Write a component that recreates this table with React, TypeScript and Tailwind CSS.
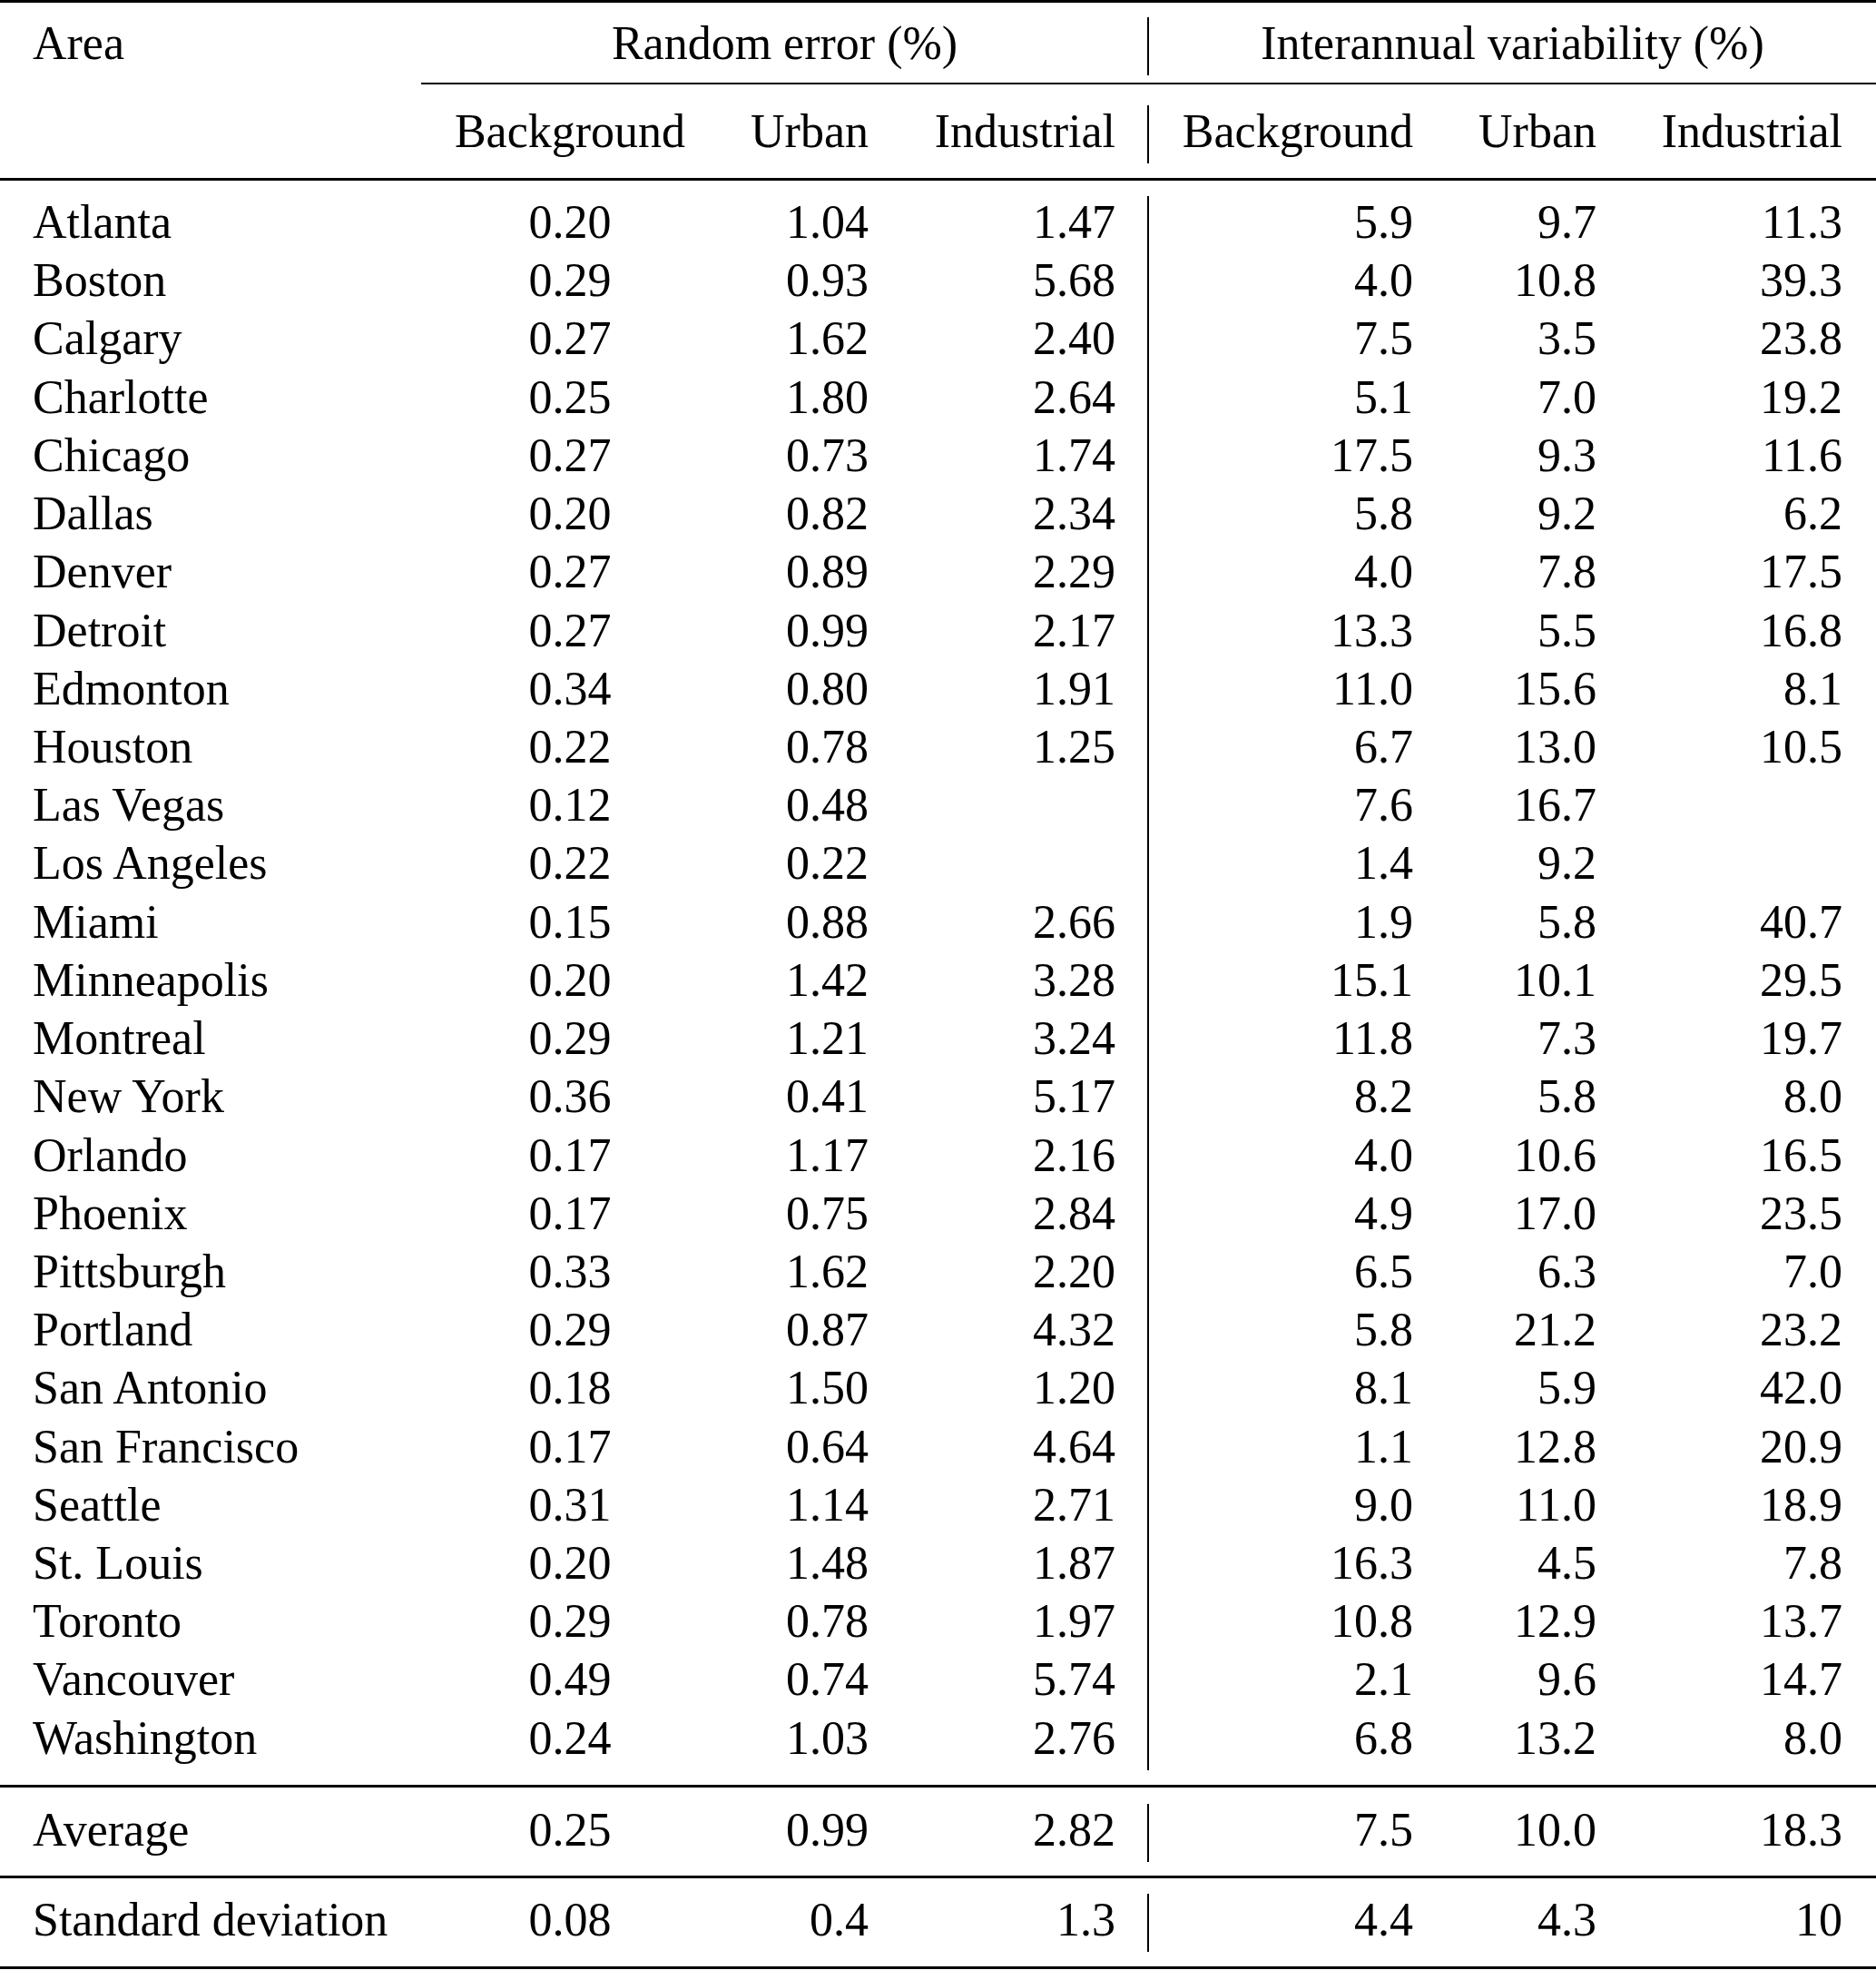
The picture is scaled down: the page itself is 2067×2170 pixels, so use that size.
import React from "react";

type Row = [string, string, string, string, string, string, string];

const rows: Row[] = [
  ["Atlanta", "0.20", "1.04", "1.47", "5.9", "9.7", "11.3"],
  ["Boston", "0.29", "0.93", "5.68", "4.0", "10.8", "39.3"],
  ["Calgary", "0.27", "1.62", "2.40", "7.5", "3.5", "23.8"],
  ["Charlotte", "0.25", "1.80", "2.64", "5.1", "7.0", "19.2"],
  ["Chicago", "0.27", "0.73", "1.74", "17.5", "9.3", "11.6"],
  ["Dallas", "0.20", "0.82", "2.34", "5.8", "9.2", "6.2"],
  ["Denver", "0.27", "0.89", "2.29", "4.0", "7.8", "17.5"],
  ["Detroit", "0.27", "0.99", "2.17", "13.3", "5.5", "16.8"],
  ["Edmonton", "0.34", "0.80", "1.91", "11.0", "15.6", "8.1"],
  ["Houston", "0.22", "0.78", "1.25", "6.7", "13.0", "10.5"],
  ["Las Vegas", "0.12", "0.48", "", "7.6", "16.7", ""],
  ["Los Angeles", "0.22", "0.22", "", "1.4", "9.2", ""],
  ["Miami", "0.15", "0.88", "2.66", "1.9", "5.8", "40.7"],
  ["Minneapolis", "0.20", "1.42", "3.28", "15.1", "10.1", "29.5"],
  ["Montreal", "0.29", "1.21", "3.24", "11.8", "7.3", "19.7"],
  ["New York", "0.36", "0.41", "5.17", "8.2", "5.8", "8.0"],
  ["Orlando", "0.17", "1.17", "2.16", "4.0", "10.6", "16.5"],
  ["Phoenix", "0.17", "0.75", "2.84", "4.9", "17.0", "23.5"],
  ["Pittsburgh", "0.33", "1.62", "2.20", "6.5", "6.3", "7.0"],
  ["Portland", "0.29", "0.87", "4.32", "5.8", "21.2", "23.2"],
  ["San Antonio", "0.18", "1.50", "1.20", "8.1", "5.9", "42.0"],
  ["San Francisco", "0.17", "0.64", "4.64", "1.1", "12.8", "20.9"],
  ["Seattle", "0.31", "1.14", "2.71", "9.0", "11.0", "18.9"],
  ["St. Louis", "0.20", "1.48", "1.87", "16.3", "4.5", "7.8"],
  ["Toronto", "0.29", "0.78", "1.97", "10.8", "12.9", "13.7"],
  ["Vancouver", "0.49", "0.74", "5.74", "2.1", "9.6", "14.7"],
  ["Washington", "0.24", "1.03", "2.76", "6.8", "13.2", "8.0"],
];

const avg: Row = ["Average", "0.25", "0.99", "2.82", "7.5", "10.0", "18.3"];
const std: Row = ["Standard deviation", "0.08", "0.4", "1.3", "4.4", "4.3", "10"];

const GRID = "grid grid-cols-[465px_326px_202px_271px_329px_202px_272px]";

function DataRow({ r, tall }: { r: Row; tall?: boolean }) {
  return (
    <div className={`${GRID} ${tall ? "h-[64px]" : "h-[64.222px]"}`}>
      <div className="pl-[36px] whitespace-nowrap">{r[0]}</div>
      <div className="text-center">{r[1]}</div>
      <div className="text-right pr-[36px]">{r[2]}</div>
      <div className="text-right pr-[35px]">{r[3]}</div>
      <div className="text-right pr-[36px] border-l-2 border-black">{r[4]}</div>
      <div className="text-right pr-[36px]">{r[5]}</div>
      <div className="text-right pr-[37px]">{r[6]}</div>
    </div>
  );
}

export default function App() {
  return (
    <div className="w-[2067px] bg-white text-black font-['Liberation_Serif','Times_New_Roman',serif] text-[52px] leading-[57px]">
      <div className="h-[3px] bg-black" />

      <div className={`${GRID} h-[64px] mt-[16px]`}>
        <div className="pl-[36px]">Area</div>
        <div className="col-span-3 text-center">Random error (%)</div>
        <div className="col-span-3 text-center border-l-2 border-black">
          Interannual variability (%)
        </div>
      </div>

      <div className="mt-[8px] ml-[464px] h-[2px] bg-black" />

      <div className={`${GRID} h-[64px] mt-[23px]`}>
        <div />
        <div className="text-center">Background</div>
        <div className="text-right pr-[36px]">Urban</div>
        <div className="text-right pr-[35px]">Industrial</div>
        <div className="text-right pr-[36px] border-l-2 border-black">Background</div>
        <div className="text-right pr-[36px]">Urban</div>
        <div className="text-right pr-[37px]">Industrial</div>
      </div>

      <div className="mt-[16px] h-[3px] bg-black" />

      <div className="mt-[17px] flex flex-col">
        {rows.map((r) => (
          <DataRow key={r[0]} r={r} />
        ))}
      </div>

      <div className="mt-[16px] h-[3px] bg-black" />

      <div className="mt-[18px]">
        <DataRow r={avg} tall />
      </div>

      <div className="mt-[15px] h-[3px] bg-black" />

      <div className="mt-[17px]">
        <DataRow r={std} tall />
      </div>

      <div className="mt-[16px] h-[3px] bg-black" />
    </div>
  );
}
